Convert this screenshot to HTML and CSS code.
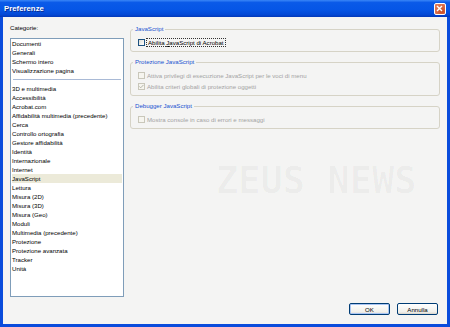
FILE: index.html
```html
<!DOCTYPE html>
<html lang="it">
<head>
    <meta charset="UTF-8">
    <title>Preferenze</title>
    <link rel="stylesheet" href="styles.css">
</head>
<body>
    <div class="window">
        <div class="titlebar">
            <span class="title">Preferenze</span>
            <span class="close-btn">
                <svg viewBox="0 0 12 12" width="12" height="12"><path d="M3.5 3.5l4 4M7.5 3.5l-4 4" stroke="#fff" stroke-width="1.4" stroke-linecap="square"/></svg>
            </span>
        </div>

        <div class="content">
            <div class="main">
                <div class="sidebar">
                    <div class="cat-label">Categorie:</div>
                    <ul class="cat-list">
                        <li>Documenti</li>
                        <li>Generali</li>
                        <li>Schermo intero</li>
                        <li>Visualizzazione pagina</li>
                        <li class="separator"></li>
                        <li>3D e multimedia</li>
                        <li>Accessibilità</li>
                        <li>Acrobat.com</li>
                        <li>Affidabilità multimedia (precedente)</li>
                        <li>Cerca</li>
                        <li>Controllo ortografia</li>
                        <li>Gestore affidabilità</li>
                        <li>Identità</li>
                        <li>Internazionale</li>
                        <li>Internet</li>
                        <li class="selected">JavaScript</li>
                        <li>Lettura</li>
                        <li>Misura (2D)</li>
                        <li>Misura (3D)</li>
                        <li>Misura (Geo)</li>
                        <li>Moduli</li>
                        <li>Multimedia (precedente)</li>
                        <li>Protezione</li>
                        <li>Protezione avanzata</li>
                        <li>Tracker</li>
                        <li>Unità</li>
                    </ul>
                </div>

                <div class="panel">
                    <fieldset class="group">
                        <legend>JavaScript</legend>
                        <label class="option">
                            <span class="check"></span>
                            <span class="focus">Abilita <u>J</u>avaScript di Acrobat</span>
                        </label>
                    </fieldset>

                    <fieldset class="group">
                        <legend>Protezione JavaScript</legend>
                        <label class="option disabled">
                            <span class="check"></span>
                            <span>Attiva privilegi di esecuzione JavaScript per le voci di menu</span>
                        </label>
                        <label class="option disabled">
                            <span class="check checked">
                                <svg viewBox="0 0 7 7" width="7" height="7"><path d="M1.3 3.4l1.4 1.4 2.8-2.9" fill="none" stroke="#b5b5a8" stroke-width="1"/></svg>
                            </span>
                            <span>Abilita criteri globali di protezione oggetti</span>
                        </label>
                    </fieldset>

                    <fieldset class="group">
                        <legend>Debugger JavaScript</legend>
                        <label class="option disabled">
                            <span class="check"></span>
                            <span>Mostra console in caso di errori e messaggi</span>
                        </label>
                    </fieldset>
                </div>
            </div>

            <div class="footer">
                <button type="button" class="btn btn-default">OK</button>
                <button type="button" class="btn">Annulla</button>
            </div>

            <div class="watermark">
                <span class="wm">ZEUS NEWS</span>
            </div>
        </div>
    </div>
</body>
</html>
```

FILE: styles.css
```css
html,
body {
    margin: 0;
    padding: 0;
}

body {
    width: 450px;
    height: 327px;
    overflow: hidden;
    font-family: "Liberation Sans", Arial, sans-serif;
    font-size: 6.1px;
    color: #000;
}

.window {
    height: 327px;
    display: flex;
    flex-direction: column;
    background: #0a4cdc;
}

.titlebar {
    height: 17px;
    flex: none;
    display: flex;
    align-items: center;
    justify-content: space-between;
    padding: 0 4px;
    background: linear-gradient(#3a86f7 0%, #0a5ae8 15%, #0656e6 55%, #0349d6 85%, #0438b8 100%);
}

.title {
    color: #fff;
    font-weight: bold;
    font-size: 7.8px;
    text-shadow: 1px 1px 0 #0a2c90;
}

.close-btn {
    width: 12px;
    height: 12px;
    box-sizing: border-box;
    border: 1px solid #fff;
    border-radius: 2px;
    background: radial-gradient(circle at 70% 70%, #c84b22, #e27a56 80%);
    display: flex;
}

.close-btn svg {
    margin: -1px;
}

.content {
    flex: 1;
    position: relative;
    margin: 0 3px 3px 3px;
    padding: 6px 7px 9px 7px;
    background: #f4f4f3;
    display: flex;
    flex-direction: column;
    min-height: 0;
}

.main {
    flex: 1;
    display: flex;
    gap: 6px;
    min-height: 0;
}

.sidebar {
    width: 114px;
    display: flex;
    flex-direction: column;
}

.cat-label {
    line-height: 10px;
    margin-bottom: 5px;
}

.cat-list {
    flex: 1;
    margin: 0;
    padding: 0 1px;
    list-style: none;
    background: #fff;
    border: 1px solid #7f9db9;
}

.cat-list li {
    line-height: 9px;
    height: 9px;
    white-space: nowrap;
}

.cat-list li.separator {
    margin: 0 1px;
    background: linear-gradient(#a9bad6, #a9bad6) center / 100% 1px no-repeat;
}

.cat-list li.selected {
    background: #ecead9;
}

.panel {
    flex: 1;
    display: flex;
    flex-direction: column;
    gap: 5px;
    padding-top: 1px;
}

.group {
    margin: 0;
    padding: 3px 7px 3px 7px;
    border: 1px solid #d6d3c6;
    border-radius: 3px;
}

.group legend {
    color: #1750d0;
    line-height: 10px;
    padding: 0 2px;
    margin-left: -5px;
}

.option {
    display: flex;
    align-items: center;
    height: 11px;
    gap: 2px;
    white-space: nowrap;
}

.check {
    width: 7px;
    height: 7px;
    box-sizing: border-box;
    border: 1px solid #1c5180;
    background: linear-gradient(135deg, #dcdcd5, #fff);
    display: flex;
}

.check svg {
    margin: -1px;
}

.option.disabled {
    color: #a3a3a3;
}

.option.disabled .check {
    border-color: #c9c7ba;
    background: #f6f5ef;
}

.focus {
    outline: 1px dotted #333;
    outline-offset: 0;
    padding: 0 1px;
}

.footer {
    flex: none;
    display: flex;
    justify-content: flex-end;
    gap: 7px;
    margin-top: 6px;
    padding-right: 2px;
}

.btn {
    width: 41px;
    height: 12px;
    padding: 0;
    font-family: inherit;
    font-size: 6.1px;
    color: #000;
    border: 1px solid #003c74;
    border-radius: 2px;
    background: linear-gradient(#ffffff, #f1f0eb 80%, #d8d3c8);
}

.btn-default {
    box-shadow: inset 0 0 0 1px #a9c5f3;
}

.watermark {
    position: absolute;
    inset: 0;
    overflow: hidden;
    pointer-events: none;
}

.wm {
    position: absolute;
    left: 214px;
    top: 144px;
    font-family: "DejaVu Sans Mono", monospace;
    font-weight: bold;
    font-size: 37px;
    line-height: 37px;
    white-space: nowrap;
    color: rgba(0, 0, 0, 0.015);
    text-shadow: -1px 1px 0 rgba(0, 0, 0, 0.03);
}
```
